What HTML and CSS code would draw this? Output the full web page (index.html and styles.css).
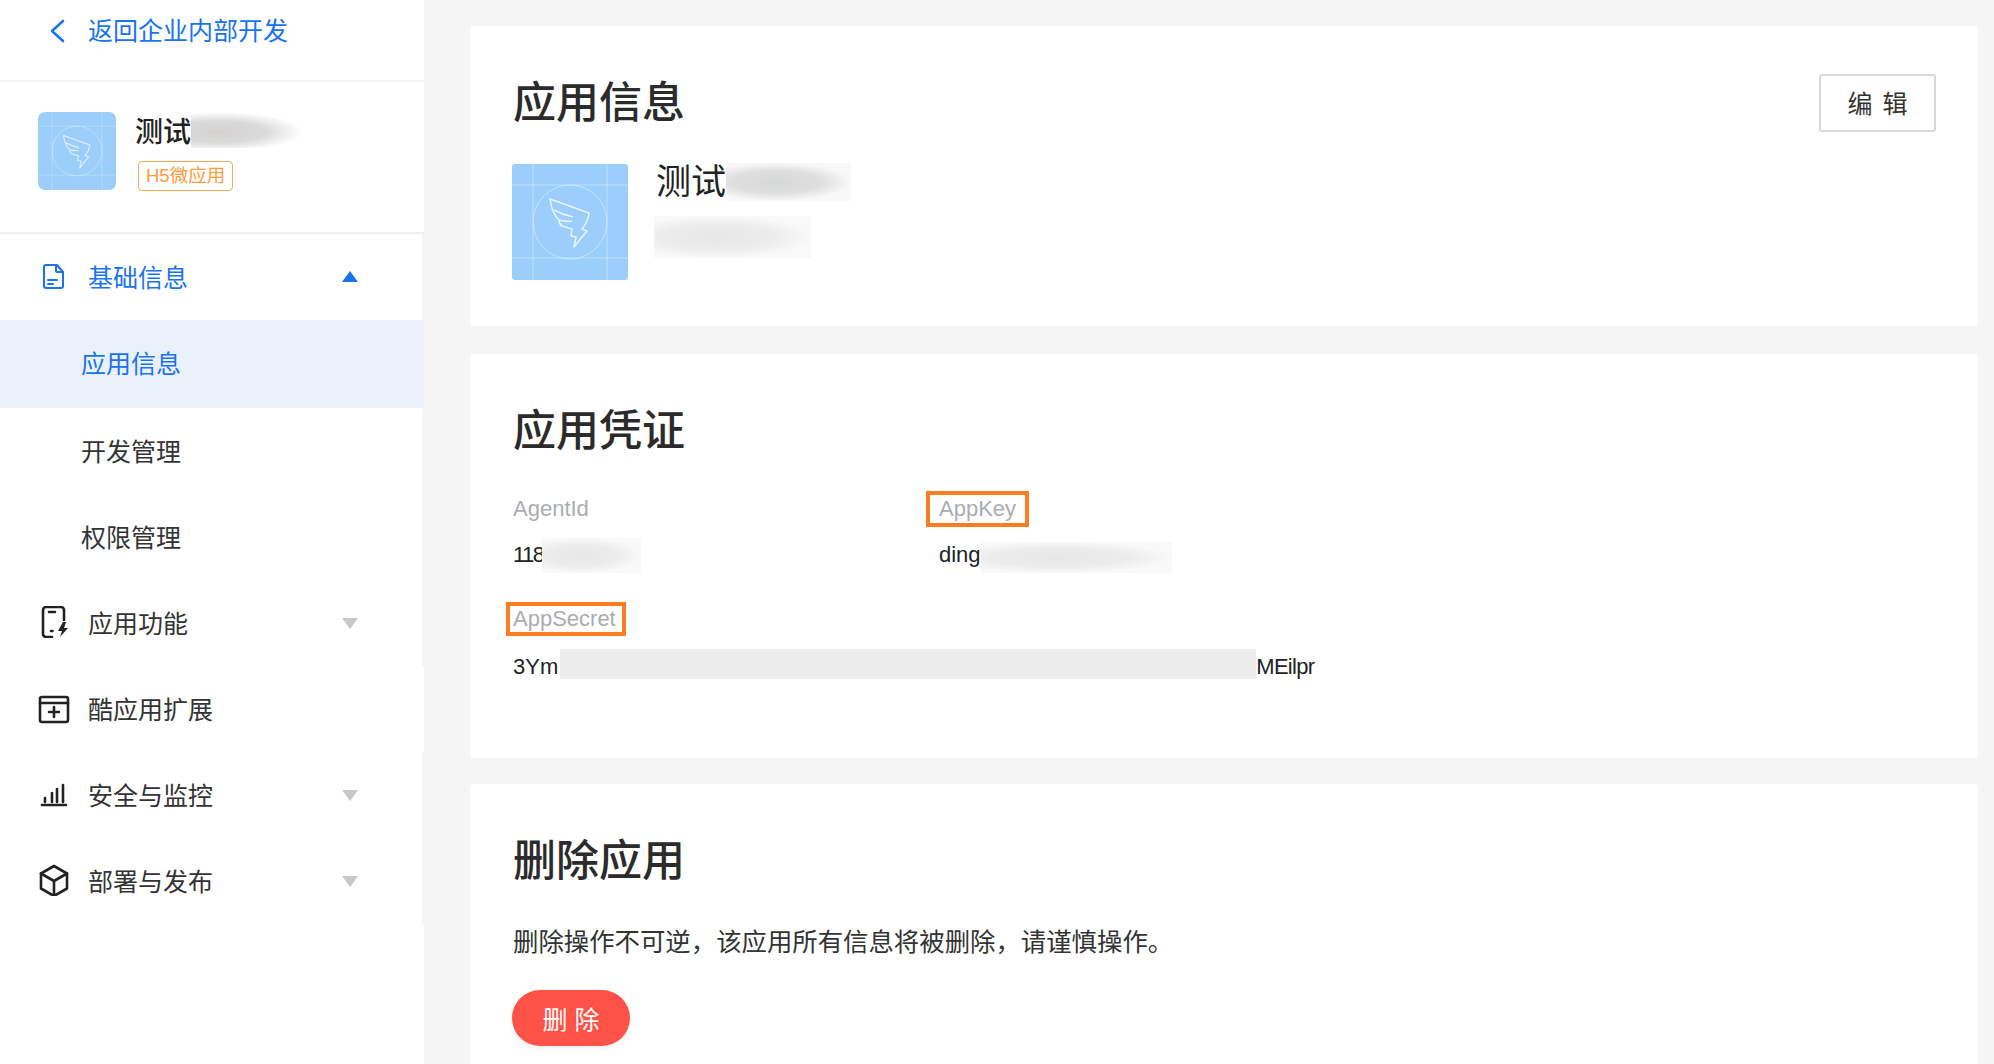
FILE: index.html
```html
<!DOCTYPE html>
<html lang="zh">
<head>
  <meta charset="utf-8">
  <title>应用信息</title>
  <link rel="stylesheet" href="styles.css">
</head>
<body>
  <svg class="defs" width="0" height="0">
    <symbol id="app-logo" viewBox="0 0 116 116">
      <rect width="116" height="116" fill="#9bcefb"/>
      <path d="M21 0V116M95 0V116M0 21H116M0 94H116" stroke="#fff" stroke-opacity=".35" stroke-width="1" fill="none"/>
      <circle cx="58" cy="58" r="37" stroke="#fff" stroke-opacity=".45" stroke-width="1" fill="none"/>
      <path d="M38 35L77 49Q76 58 70 65L75 67L62 83L64 73L59 72L60 65L50 62Q47 60 47 56Q40 50 38 35Z" stroke="#fff" stroke-opacity=".75" stroke-width="1.6" stroke-linejoin="round" fill="none"/>
      <path d="M42 46Q51 51 61 53M47 56Q54 58 60 57" stroke="#fff" stroke-opacity=".75" stroke-width="1.6" fill="none"/>
    </symbol>
  </svg>

  <aside class="sidebar">
    <a class="back">
      <svg class="icon" viewBox="0 0 32 32"><path d="M25 6L14 16L25 26"/></svg>
      <span>返回企业内部开发</span>
    </a>

    <div class="app-box">
      <svg class="app-logo-small"><use href="#app-logo"/></svg>
      <div class="app-box-info">
        <div class="app-box-name">测试<span class="smudge smudge-side"></span></div>
        <span class="tag">H5微应用</span>
      </div>
    </div>

    <nav class="menu">
      <div class="menu-item open">
        <svg class="icon" viewBox="0 0 32 32">
          <path d="M8 5H19L25 12V26A2 2 0 0 1 23 28H8A2 2 0 0 1 6 26V7A2 2 0 0 1 8 5Z"/>
          <path d="M18 5V11A1 1 0 0 0 19 12H25M10 20H19M10 24H15"/>
        </svg>
        <span>基础信息</span>
        <i class="caret up"></i>
      </div>
      <div class="menu-sub active">应用信息</div>
      <div class="menu-sub">开发管理</div>
      <div class="menu-sub">权限管理</div>
      <div class="menu-item">
        <svg class="icon" viewBox="0 0 32 32">
          <path d="M14 31H8A3 3 0 0 1 5 28V4A3 3 0 0 1 8 1H23A3 3 0 0 1 26 4V14M11 6H17M13 25H14.5"/>
          <path class="solid" d="M25 16L20 25H24L22 31L30 22H26L28 16Z"/>
        </svg>
        <span>应用功能</span>
        <i class="caret"></i>
      </div>
      <div class="menu-item wide">
        <svg class="icon" viewBox="0 0 32 32">
          <rect x="2" y="5" width="28" height="25" rx="2"/>
          <path d="M2 11H30M11 20H21M16 15V25"/>
        </svg>
        <span>酷应用扩展</span>
      </div>
      <div class="menu-item">
        <svg class="icon" viewBox="0 0 32 32">
          <path d="M4 27H28M7 20V24M14 15V24M19 11V24M25 7V24"/>
        </svg>
        <span>安全与监控</span>
        <i class="caret"></i>
      </div>
      <div class="menu-item">
        <svg class="icon" viewBox="0 0 32 32">
          <path d="M16 2L29 9.5V24.5L16 32L3 24.5V9.5Z"/>
          <path d="M3 9.5L16 17L29 9.5M16 17V32"/>
        </svg>
        <span>部署与发布</span>
        <i class="caret"></i>
      </div>
      <div class="menu-rest"></div>
    </nav>
  </aside>

  <main class="main">
    <section class="card card-info">
      <div class="card-head">
        <h2>应用信息</h2>
        <button class="btn-edit">编 辑</button>
      </div>
      <div class="app-row">
        <svg class="app-logo-big"><use href="#app-logo"/></svg>
        <div>
          <div class="app-name">测试<span class="smudge smudge-name"></span></div>
          <div class="smudge smudge-desc"></div>
        </div>
      </div>
    </section>

    <section class="card card-cred">
      <h2>应用凭证</h2>
      <div class="fields">
        <div class="field">
          <div class="field-label">AgentId</div>
          <div class="field-value"><span class="tight">118</span><span class="smudge smudge-id"></span></div>
        </div>
        <div class="field">
          <div class="field-label"><span class="marked marked-key">AppKey</span></div>
          <div class="field-value">ding<span class="smudge smudge-key"></span></div>
        </div>
        <div class="field field-full">
          <div class="field-label"><span class="marked marked-secret">AppSecret</span></div>
          <div class="field-value field-value-secret">3Ym<span class="smudge smudge-secret"></span><span class="tight-end">MEilpr</span></div>
        </div>
      </div>
    </section>

    <section class="card card-delete">
      <h2>删除应用</h2>
      <p class="delete-text">删除操作不可逆，该应用所有信息将被删除，请谨慎操作。</p>
      <button class="btn-delete">删 除</button>
    </section>
  </main>
</body>
</html>
```

FILE: styles.css
```css
* {
  box-sizing: border-box;
}

html,
body {
  margin: 0;
  height: 1064px;
  overflow: hidden;
}

body {
  display: flex;
  background: #f5f5f5;
  color: #333;
  font-family: "Liberation Sans", "Noto Sans CJK SC", sans-serif;
}

.defs {
  position: absolute;
}

/* sidebar */
.sidebar {
  flex: none;
  width: 426px;
  display: flex;
  flex-direction: column;
}

.icon {
  flex: none;
  width: 32px;
  height: 32px;
  fill: none;
  stroke: #222;
  stroke-width: 2.6;
  stroke-linecap: round;
  stroke-linejoin: round;
}

.icon .solid {
  fill: #222;
  stroke: none;
}

.back {
  width: 424px;
  height: 80px;
  padding: 11px 0 0 38px;
  display: flex;
  align-items: flex-start;
  gap: 18px;
  background: #fff;
  color: #1a73f0;
  font-size: 25px;
  line-height: 40px;
}

.back .icon {
  margin-top: 4px;
  stroke: #1a73f0;
  stroke-width: 2.6;
}

.app-box {
  width: 424px;
  height: 152px;
  margin-top: 2px;
  padding: 30px 0 0 38px;
  display: flex;
  gap: 19px;
  background: #fff;
  border-bottom: 2px solid #f0f0f0;
}

.app-logo-small {
  flex: none;
  width: 78px;
  height: 78px;
  border-radius: 7px;
}

.app-box-info {
  margin-top: 3px;
}

.app-box-name {
  display: flex;
  height: 36px;
  color: #222;
  font-size: 28px;
  font-weight: 500;
  line-height: 36px;
}

.tag {
  display: inline-block;
  height: 30px;
  margin: 10px 0 0 3px;
  padding: 0 7px;
  border: 1.5px solid #ffa858;
  border-radius: 4px;
  color: #ff9a3c;
  font-size: 18.5px;
  line-height: 27px;
}

.menu {
  flex: 1;
  display: flex;
  flex-direction: column;
}

.menu-item,
.menu-sub {
  width: 422px;
  height: 86px;
  display: flex;
  align-items: center;
  padding-bottom: 3px;
  background: #fff;
  font-size: 25px;
}

.menu-item {
  padding-left: 38px;
  padding-right: 64px;
  gap: 18px;
}

.menu-item.wide {
  width: 424px;
}

.menu-item.open {
  color: #1a73f0;
}

.menu-item.open .icon {
  stroke: #1a73f0;
  stroke-width: 2;
}

.menu-sub {
  padding-left: 81px;
}

.menu-sub.active {
  width: 424px;
  height: 88px;
  padding-bottom: 5px;
  background: #eaf1fa;
  color: #1a73f0;
}

.caret {
  margin-left: auto;
  margin-top: 4px;
  width: 0;
  height: 0;
  border-left: 8px solid transparent;
  border-right: 8px solid transparent;
  border-top: 11px solid #c8c8c8;
}

.caret.up {
  margin-top: 2px;
  border-top: 0;
  border-bottom: 11px solid #1a73f0;
}

.menu-rest {
  flex: 1;
  width: 424px;
  background: #fff;
}

/* blurred-out text */
.smudge {
  display: inline-block;
  background: radial-gradient(ellipse farthest-side at 40% 50%, #e6e7e7, #ececec 60%, #f9f9f9);
}

.smudge-side {
  width: 112px;
  height: 36px;
  margin-top: -3px;
  background: radial-gradient(ellipse farthest-side at 25% 55%, #d4d2d1, #dadada 55%, #fff);
}

.smudge-name {
  width: 125px;
  height: 38px;
  background: radial-gradient(ellipse farthest-side at 40% 50%, #d6d7d7, #dfdfdf 60%, #f8f8f8);
}

.smudge-desc {
  display: block;
  width: 157px;
  height: 42px;
  margin: 15px 0 0 -2px;
}

.smudge-id {
  width: 99px;
  height: 35px;
  margin-left: -1px;
}

.smudge-key {
  width: 191px;
  height: 31px;
  margin-top: 4px;
}

.smudge-secret {
  width: 696px;
  height: 30px;
  margin-left: 2px;
  margin-bottom: 6px;
  background: #ececec;
}

.tight {
  letter-spacing: -1.6px;
}

.tight-end {
  letter-spacing: -.7px;
}

/* cards */
.main {
  flex: 1;
  padding: 26px 16px 0 44px;
}

.card {
  padding: 47px 42px 0 43px;
  border-radius: 4px;
  background: #fff;
}

.card-info {
  height: 300px;
}

.card-cred {
  height: 404px;
  margin-top: 28px;
}

.card-delete {
  height: 300px;
  margin-top: 26px;
}

h2 {
  margin: 0;
  color: #2b2b2b;
  font-size: 43px;
  font-weight: 500;
  line-height: 60px;
}

.card-head {
  display: flex;
  justify-content: space-between;
  align-items: flex-start;
}

.btn-edit {
  width: 117px;
  height: 58px;
  margin-top: 1px;
  padding-bottom: 3px;
  border: 2px solid #d8d8d8;
  border-radius: 3px;
  background: #fff;
  color: #333;
  font: inherit;
  font-size: 25px;
  word-spacing: 3px;
}

.app-row {
  display: flex;
  gap: 28px;
  margin-top: 31px;
  margin-left: -1px;
}

.app-logo-big {
  flex: none;
  width: 116px;
  height: 116px;
  border-radius: 3px;
}

.app-name {
  display: flex;
  height: 38px;
  color: #222;
  font-size: 35px;
  line-height: 38px;
  margin-top: -1px;
}

.fields {
  display: grid;
  grid-template-columns: 426px 1fr;
  row-gap: 28px;
  margin-top: 30px;
}

.field-full {
  grid-column: 1 / 3;
}

.field-label {
  color: #aaadb1;
  font-size: 22px;
  line-height: 36px;
}

.field-value {
  display: flex;
  align-items: center;
  margin-top: 10px;
  color: #222;
  font-size: 22px;
  line-height: 36px;
}

.field-value-secret {
  margin-top: 12px;
}

.marked {
  display: inline-block;
  line-height: 28px;
  outline: 4px solid #ff7d20;
  outline-offset: 0;
}

.marked-key {
  margin-left: -9px;
  padding: 0 9px;
}

.marked-secret {
  margin-left: -3px;
  padding: 0 6px 0 3px;
  line-height: 26px;
}

.delete-text {
  margin: 33px 0 0;
  color: #333;
  font-size: 25.4px;
  line-height: 36px;
}

.btn-delete {
  display: block;
  width: 118px;
  height: 56px;
  margin-top: 30px;
  margin-left: -1px;
  border: 0;
  border-radius: 28px;
  background: #ff5247;
  box-shadow: 0 3px 6px rgba(0, 0, 0, .06);
  color: #fff;
  font: inherit;
  font-size: 25px;
}
```
